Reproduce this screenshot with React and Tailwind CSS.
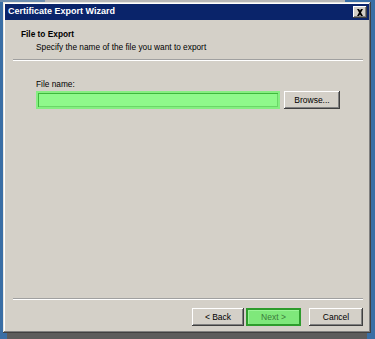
const font = { fontFamily: '"Liberation Sans", Arial, sans-serif' };

function Bevel({ children, className = "" }) {
  return (
    <button
      type="button"
      className={`flex h-[18px] items-center justify-center bg-[#d4d0c8] text-[8.5px] text-black shadow-[inset_-1px_-1px_#404040,inset_1px_1px_#ffffff,inset_-2px_-2px_#808080] ${className}`}
    >
      {children}
    </button>
  );
}

function Separator() {
  return (
    <div className="mx-[8px] mr-[6px] border-t border-b border-t-[#a0a0a0] border-b-white" />
  );
}

export default function App() {
  return (
    <div className="flex h-[339px] w-[375px] flex-col overflow-hidden bg-[#3a6ea5]" style={font}>
      <div className="flex h-[2px] shrink-0">
        <div className="w-[45px] bg-[#6f8fb0]" />
        <div className="flex-1 bg-[#b8b8b8]" />
        <div className="w-[30px] bg-[#3a6ea5]" />
      </div>
      <div className="flex flex-1 pl-[3px] pr-[4px]">
        {/* dialog window */}
        <div className="flex h-[331px] w-[368px] flex-col bg-[#d4d0c8] p-[2px] shadow-[inset_-1px_-1px_#404040,inset_1px_1px_#e8e6e0,inset_-2px_-2px_#808080,inset_2px_2px_#ffffff]">
          <div className="flex h-[16px] items-center bg-[#0a246a] pl-[3px] pr-[2px]">
            <span className="flex-1 text-[9px] font-bold text-white">Certificate Export Wizard</span>
            <div className="flex h-[12px] w-[14px] items-center justify-center bg-[#d4d0c8] shadow-[inset_-1px_-1px_#404040,inset_1px_1px_#ffffff,inset_-2px_-2px_#808080]">
              <svg width="8" height="7" viewBox="0 0 8 7">
                <path d="M1 0h2l1 1.5L5 0h2L5 3.5 7 7H5L4 5.5 3 7H1l2-3.5z" fill="#000" />
              </svg>
            </div>
          </div>

          <div className="flex flex-1 flex-col">
            <div className="pl-[16px] pt-[9px]">
              <div className="text-[8.3px] font-bold leading-[11px] text-black">File to Export</div>
              <div className="mt-[2px] pl-[15px] text-[8.3px] leading-[11px] text-black">
                Specify the name of the file you want to export
              </div>
            </div>
            <div className="mt-[6px]">
              <Separator />
            </div>

            <div className="pl-[31px] pt-[18px]">
              <div className="text-[8.3px] leading-[10px] text-black">File name:</div>
              <div className="mt-[2px] flex items-center gap-[4px]">
                <div className="h-[18px] w-[244px] border-2 border-[#86ee82] bg-[#8ff98b] shadow-[inset_1px_1px_#3fb83c,inset_-1px_-1px_#6ad867]" />
                <Bevel className="w-[56px]">Browse...</Bevel>
              </div>
            </div>

            <div className="flex-1" />
            <Separator />
            <div className="flex justify-end gap-[8px] pb-[5px] pr-[6px] pt-[8px]">
              <div className="flex gap-[2px]">
                <Bevel className="w-[52px]">&lt; Back</Bevel>
                <button
                  type="button"
                  className="flex h-[18px] w-[55px] items-center justify-center border-2 border-[#2e9c2c] bg-[#7fe87b] text-[8.5px] text-[#3d7a3b] shadow-[inset_1px_1px_#9af596]"
                >
                  Next &gt;
                </button>
              </div>
              <Bevel className="w-[54px]">Cancel</Bevel>
            </div>
          </div>
        </div>
      </div>
      <div className="flex h-[6px] shrink-0 pl-[3px]">
        <div className="w-[4px] bg-[#3a6ea5]" />
        <div className="w-[360px] bg-[#5c5c5c]" />
        <div className="flex-1 bg-[#3a6ea5]" />
      </div>
    </div>
  );
}
